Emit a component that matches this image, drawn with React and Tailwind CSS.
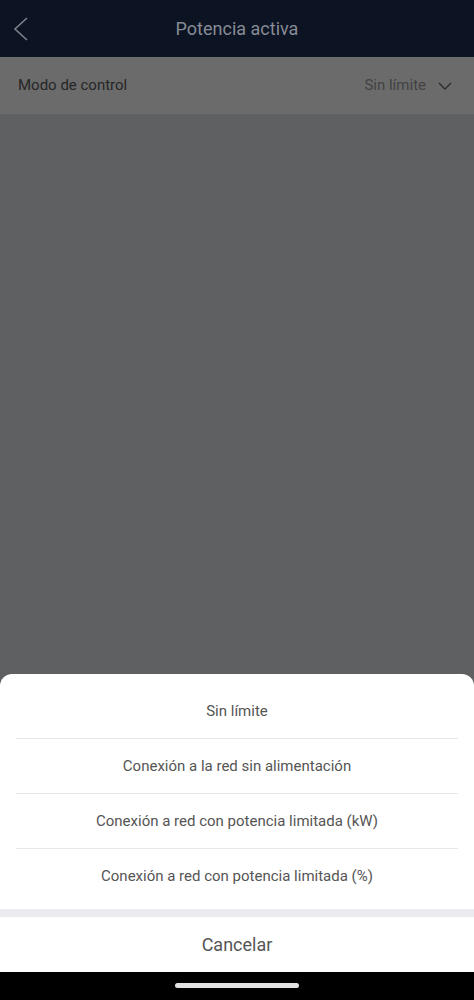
import React from "react";

const options = [
  "Sin límite",
  "Conexión a la red sin alimentación",
  "Conexión a red con potencia limitada (kW)",
  "Conexión a red con potencia limitada (%)",
];

export default function App() {
  return (
    <div
      className="w-[474px] h-[1000px] flex flex-col bg-[#5f6062] overflow-hidden"
      style={{ fontFamily: "Roboto, 'Noto Sans', sans-serif" }}
    >
      {/* Header */}
      <div className="h-[57px] bg-[#0c1322] flex items-center relative shrink-0">
        <svg
          className="absolute left-[13px] top-[16px]"
          width="16"
          height="26"
          viewBox="0 0 16 26"
          fill="none"
        >
          <path d="M14 2L2 13l12 11" stroke="#7d828b" strokeWidth="1.6" />
        </svg>
        <div className="w-full text-center text-[18px] text-[#868b95]">Potencia activa</div>
      </div>

      {/* Control mode row */}
      <div className="h-[57px] bg-[#6b6b6b] flex items-center justify-between px-[18px] shrink-0">
        <span className="text-[15px] text-[#262626]">Modo de control</span>
        <div className="flex items-center gap-[12px]">
          <span className="text-[15px] text-[#424242]">Sin límite</span>
          <svg width="14" height="8" viewBox="0 0 14 8" fill="none" className="mr-[4px]">
            <path d="M1 1l6 6 6-6" stroke="#2e2e2e" strokeWidth="1.4" />
          </svg>
        </div>
      </div>

      <div className="flex-1" />

      {/* Bottom sheet */}
      <div className="bg-white rounded-t-[12px] shrink-0">
        <div className="pt-[10px] pb-[6px]">
          {options.map((opt, i) => (
            <div key={opt} className="mx-[16px]">
              <div className="h-[54px] flex items-center justify-center text-[15px] text-[#555555]">
                {opt}
              </div>
              {i < options.length - 1 && <div className="h-px bg-[#e8e8e8]" />}
            </div>
          ))}
        </div>
        <div className="h-[8px] bg-[#ebebef]" />
        <div className="h-[55px] flex items-center justify-center text-[18px] text-[#555555]">
          Cancelar
        </div>
      </div>

      {/* System nav bar */}
      <div className="h-[28px] bg-black flex items-center justify-center shrink-0">
        <div className="w-[124px] h-[5px] rounded-full bg-[#e2e2e2] mb-[2px]" />
      </div>
    </div>
  );
}
